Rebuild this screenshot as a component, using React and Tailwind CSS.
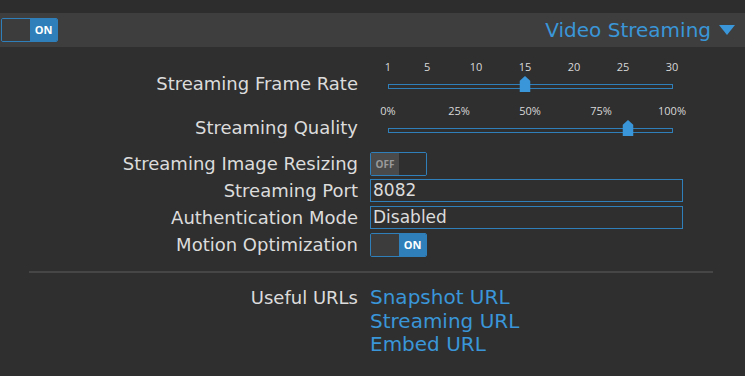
import React from 'react';

const font = { fontFamily: '"DejaVu Sans", "Open Sans", sans-serif' };
const small = { fontFamily: '"Open Sans", "DejaVu Sans", sans-serif' };

const Toggle = ({ on }) => (
  <div className="flex w-[57px] h-[24px] border border-[#2e7fba] rounded-[2px] overflow-hidden" style={small}>
    {on ? (
      <>
        <div className="w-[28px] bg-[#3c3c3c]"></div>
        <div className="flex-1 bg-[#2e7fba] flex items-center justify-center text-[11px] font-bold text-white">ON</div>
      </>
    ) : (
      <>
        <div className="w-[28px] bg-[#4a4a4a] flex items-center justify-center text-[10px] font-bold text-[#9a9a9a]">OFF</div>
        <div className="flex-1 bg-[#2f2f2f]"></div>
      </>
    )}
  </div>
);

const Thumb = () => (
  <svg width="11" height="16" viewBox="0 0 11 16">
    <polygon points="0,5 5.5,0 11,5 11,16 0,16" fill="#3a96d8" />
  </svg>
);

const Slider = ({ ticks, value }) => (
  <div className="relative w-[313px] h-[44px]" style={small}>
    {ticks.map((t) => (
      <span
        key={t.label}
        className="absolute top-[3px] -translate-x-1/2 text-[11px] text-[#d8d8d8]"
        style={{ left: 18 + t.pos * 284 }}
      >
        {t.label}
      </span>
    ))}
    <div className="absolute left-[18px] top-[28px] w-[285px] h-[5px] border border-[#2e7fba]"></div>
    <div className="absolute top-[20px] -translate-x-1/2" style={{ left: 18 + value * 284 }}>
      <Thumb />
    </div>
  </div>
);

const Row = ({ label, children, h = 'h-[27px]', labelClass = '' }) => (
  <div className={`flex ${h}`}>
    <div className={`w-[358px] text-right text-[18px] text-[#dcdcdc] whitespace-nowrap ${labelClass}`}>{label}</div>
    <div className="ml-[12px]">{children}</div>
  </div>
);

export default function App() {
  const rate = [1, 5, 10, 15, 20, 25, 30].map((v) => ({ label: String(v), pos: (v - 1) / 29 }));
  const quality = [0, 25, 50, 75, 100].map((v) => ({ label: v + '%', pos: v / 100 }));

  return (
    <div className="w-[745px] h-[376px] bg-[#2f2f2f] overflow-hidden" style={font}>
      <div className="h-[13px] bg-[#2d2d2d]"></div>
      <div className="h-[34px] bg-[#3e3e3e] flex items-center justify-between pl-[1px] pr-[10px]">
        <Toggle on />
        <div className="flex items-center gap-[8px] text-[20px] text-[#3a96d8]">
          <span>Video Streaming</span>
          <svg width="16" height="12" viewBox="0 0 16 12">
            <polygon points="0,1 16,1 8,11" fill="#3a96d8" />
          </svg>
        </div>
      </div>

      <div className="pt-[9px]">
        <Row label="Streaming Frame Rate" h="h-[44px]" labelClass="pt-[14px]">
          <Slider ticks={rate} value={14 / 29} />
        </Row>
        <Row label="Streaming Quality" h="h-[52px]" labelClass="pt-[14px]">
          <Slider ticks={quality} value={0.845} />
        </Row>
        <div className="flex flex-col">
          <Row label="Streaming Image Resizing" labelClass="leading-[24px]">
            <Toggle />
          </Row>
          <Row label="Streaming Port" labelClass="leading-[24px]">
            <input
              className="w-[313px] h-[23px] border border-[#2e7fba] bg-transparent text-[17px] text-[#dcdcdc] px-[2px] outline-none"
              defaultValue="8082"
            />
          </Row>
          <Row label="Authentication Mode" labelClass="leading-[24px]">
            <div className="w-[313px] h-[23px] border border-[#2e7fba] text-[17px] text-[#dcdcdc] px-[2px] leading-[21px]">
              Disabled
            </div>
          </Row>
          <Row label="Motion Optimization" labelClass="leading-[24px]">
            <Toggle on />
          </Row>
        </div>

        <div className="ml-[29px] mr-[32px] mt-[11px] h-[2px] bg-[#464646]"></div>

        <div className="flex mt-[13px]">
          <div className="w-[358px] text-right text-[18px] text-[#dcdcdc] leading-[24px]">Useful URLs</div>
          <div className="ml-[12px] flex flex-col text-[20px] leading-[23.5px] text-[#3a96d8]">
            <a>Snapshot URL</a>
            <a>Streaming URL</a>
            <a>Embed URL</a>
          </div>
        </div>
      </div>
    </div>
  );
}
